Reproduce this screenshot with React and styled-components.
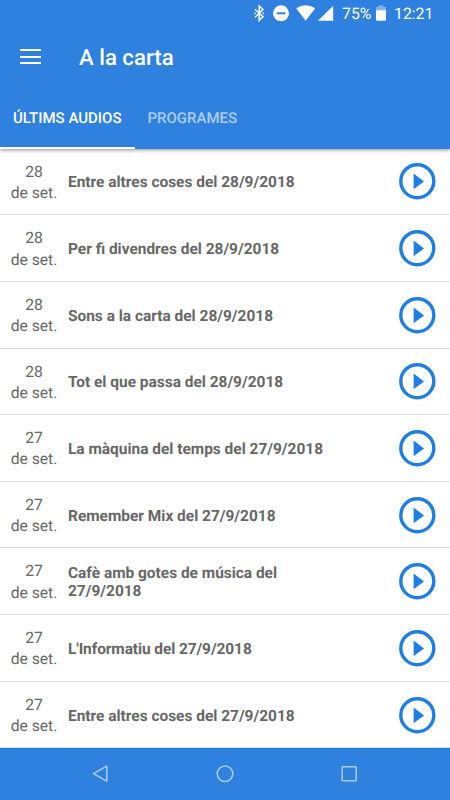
import React from "react";
import styled, { createGlobalStyle, ThemeProvider } from "styled-components";

const theme = {
  primary: "#2f81e0",
  accent: "#1f7ee3",
  text: "#676767",
  date: "#666",
  line: "#dcdcdc",
};

const GlobalStyle = createGlobalStyle`
  * {
    box-sizing: border-box;
    margin: 0;
    padding: 0;
  }
  body {
    background-color: #fff;
    font-family: Roboto, "Liberation Sans", sans-serif;
    text-rendering: geometricPrecision;
  }
`;

const Screen = styled.div`
  width: 450px;
  height: 800px;
  display: flex;
  flex-direction: column;
  overflow: hidden;
  background-color: #fff;
`;

const Header = styled.header`
  height: 148.6px;
  flex-shrink: 0;
  display: flex;
  flex-direction: column;
  position: relative;
  z-index: 1;
  color: #fff;
  background-color: ${(props) => props.theme.primary};
  box-shadow: 0 1px 4px rgba(0, 0, 0, 0.45);
`;

const StatusBar = styled.div`
  height: 28px;
  padding-right: 17px;
  display: flex;
  align-items: center;
  justify-content: flex-end;
  svg {
    display: block;
  }
`;

const StatusText = styled.span`
  width: ${(props) => props.$width};
  margin-left: 8px;
  font-size: 15.8px;
  line-height: 28px;
  white-space: nowrap;
`;

const Toolbar = styled.div`
  height: 60px;
  padding-left: 20px;
  display: flex;
  align-items: center;
`;

const MenuButton = styled.button`
  width: 21px;
  height: 15px;
  margin-top: -3px;
  display: flex;
  flex-direction: column;
  justify-content: space-between;
  border: none;
  background: none;
  span {
    height: 2px;
    background-color: #fff;
  }
`;

const Title = styled.h1`
  margin-left: 38px;
  margin-top: -1px;
  font-size: 22.2px;
  font-weight: 500;
  line-height: 28px;
`;

const Tabs = styled.nav`
  flex: 1;
  display: flex;
`;

const Tab = styled.div`
  padding: 1px 13px 0;
  display: flex;
  align-items: center;
  font-size: 15px;
  font-weight: 500;
  white-space: nowrap;
  color: ${(props) => (props.$active ? "#fff" : "rgba(255, 255, 255, 0.6)")};
  border-bottom: 2.5px solid ${(props) => (props.$active ? "#fff" : "transparent")};
`;

const List = styled.ul`
  flex: 1;
  list-style: none;
  overflow: hidden;
`;

const Row = styled.li`
  height: 66.65px;
  padding-right: 14px;
  display: flex;
  align-items: center;
  border-bottom: 1px solid ${(props) => props.theme.line};
`;

const DateBox = styled.div`
  width: 68px;
  padding-top: 1px;
  text-align: center;
  font-size: 15.7px;
  line-height: 21.3px;
  color: ${(props) => props.theme.date};
`;

const Name = styled.h2`
  width: 262px;
  margin-right: auto;
  padding-top: 2px;
  font-size: 15.45px;
  font-weight: 700;
  line-height: 18px;
  letter-spacing: ${(props) => props.$spacing || "normal"};
  color: ${(props) => props.theme.text};
`;

const PlayIcon = styled.svg`
  width: 38px;
  height: 38px;
  display: block;
  color: ${(props) => props.theme.accent};
`;

const NavBar = styled.footer`
  height: 52px;
  flex-shrink: 0;
  padding-bottom: 1px;
  display: flex;
  align-items: center;
  justify-content: center;
  gap: 106px;
  color: rgba(255, 255, 255, 0.6);
  background-color: ${(props) => props.theme.primary};
  border-top: 1px solid ${(props) => props.theme.accent};
`;

const episodes = [
  { day: "28", name: "Entre altres coses del 28/9/2018" },
  { day: "28", name: "Per fi divendres del 28/9/2018" },
  { day: "28", name: "Sons a la carta del 28/9/2018" },
  { day: "28", name: "Tot el que passa del 28/9/2018" },
  { day: "27", name: "La màquina del temps del 27/9/2018" },
  { day: "27", name: "Remember Mix del 27/9/2018" },
  { day: "27", name: "Cafè amb gotes de música del 27/9/2018" },
  { day: "27", name: "L'Informatiu del 27/9/2018", spacing: "-0.08px" },
  { day: "27", name: "Entre altres coses del 27/9/2018" },
];

const StatusIcons = () => (
  <svg width="82" height="28" viewBox="252 0 82 28" fill="#fff">
    <path
      d="M255 9.2l8 7.6-3.8 3.6V6l3.8 3.6-8 7.6"
      fill="none"
      stroke="#fff"
      strokeWidth="1.5"
    />
    <circle cx="255" cy="13.3" r="0.9" />
    <circle cx="263.4" cy="13.3" r="0.9" />
    <circle cx="281" cy="13.3" r="8" />
    <rect x="276.7" y="12.3" width="8.7" height="2" fill="#2f81e0" />
    <path d="M296.2 8.2Q305.7 2.2 315.2 8.2L305.7 20.7Z" />
    <path d="M333.2 5.7V20.8H318Z" />
  </svg>
);

const Battery = styled.svg`
  margin-left: 5px;
`;

const Episode = ({ day, name, spacing }) => {
  return (
    <Row>
      <DateBox>
        {day}
        <br />
        de set.
      </DateBox>
      <Name $spacing={spacing}>{name}</Name>
      <PlayIcon viewBox="0 0 38 38">
        <circle cx="19.3" cy="19.2" r="16.5" fill="none" stroke="currentColor" strokeWidth="3.4" />
        <path d="M15.6 11.5V27.2L26 19.4Z" fill="currentColor" />
      </PlayIcon>
    </Row>
  );
};

const App = () => {
  return (
    <ThemeProvider theme={theme}>
      <GlobalStyle />
      <Screen>
        <Header>
          <StatusBar>
            <StatusIcons />
            <StatusText $width="29px">75%</StatusText>
            <Battery width="10" height="28" viewBox="0 0 10 28">
              <path d="M0 7H2.5V5.4H7.5V7H10V10.5H0Z" fill="#fff" opacity="0.4" />
              <path d="M0 10.3H10V19.8Q10 20.8 9 20.8H1Q0 20.8 0 19.8Z" fill="#fff" />
            </Battery>
            <StatusText $width="39px">12:21</StatusText>
          </StatusBar>
          <Toolbar>
            <MenuButton aria-label="Menu">
              <span />
              <span />
              <span />
            </MenuButton>
            <Title>A la carta</Title>
          </Toolbar>
          <Tabs>
            <Tab $active>ÚLTIMS AUDIOS</Tab>
            <Tab>PROGRAMES</Tab>
          </Tabs>
        </Header>
        <List>
          {episodes.map((episode) => (
            <Episode key={episode.name} {...episode} />
          ))}
        </List>
        <NavBar>
          <svg width="18" height="18" viewBox="0 0 18 18" fill="none" stroke="currentColor" strokeWidth="1.5">
            <path d="M14.8 1.2V16.2L1.4 8.7Z" strokeLinejoin="round" />
          </svg>
          <svg width="18" height="18" viewBox="0 0 18 18" fill="none" stroke="currentColor" strokeWidth="1.5">
            <circle cx="9" cy="8.8" r="7.8" />
          </svg>
          <svg width="18" height="18" viewBox="0 0 18 18" fill="none" stroke="currentColor" strokeWidth="1.5">
            <rect x="2.2" y="1.8" width="14" height="14" rx="0.6" />
          </svg>
        </NavBar>
      </Screen>
    </ThemeProvider>
  );
};

export default App;
